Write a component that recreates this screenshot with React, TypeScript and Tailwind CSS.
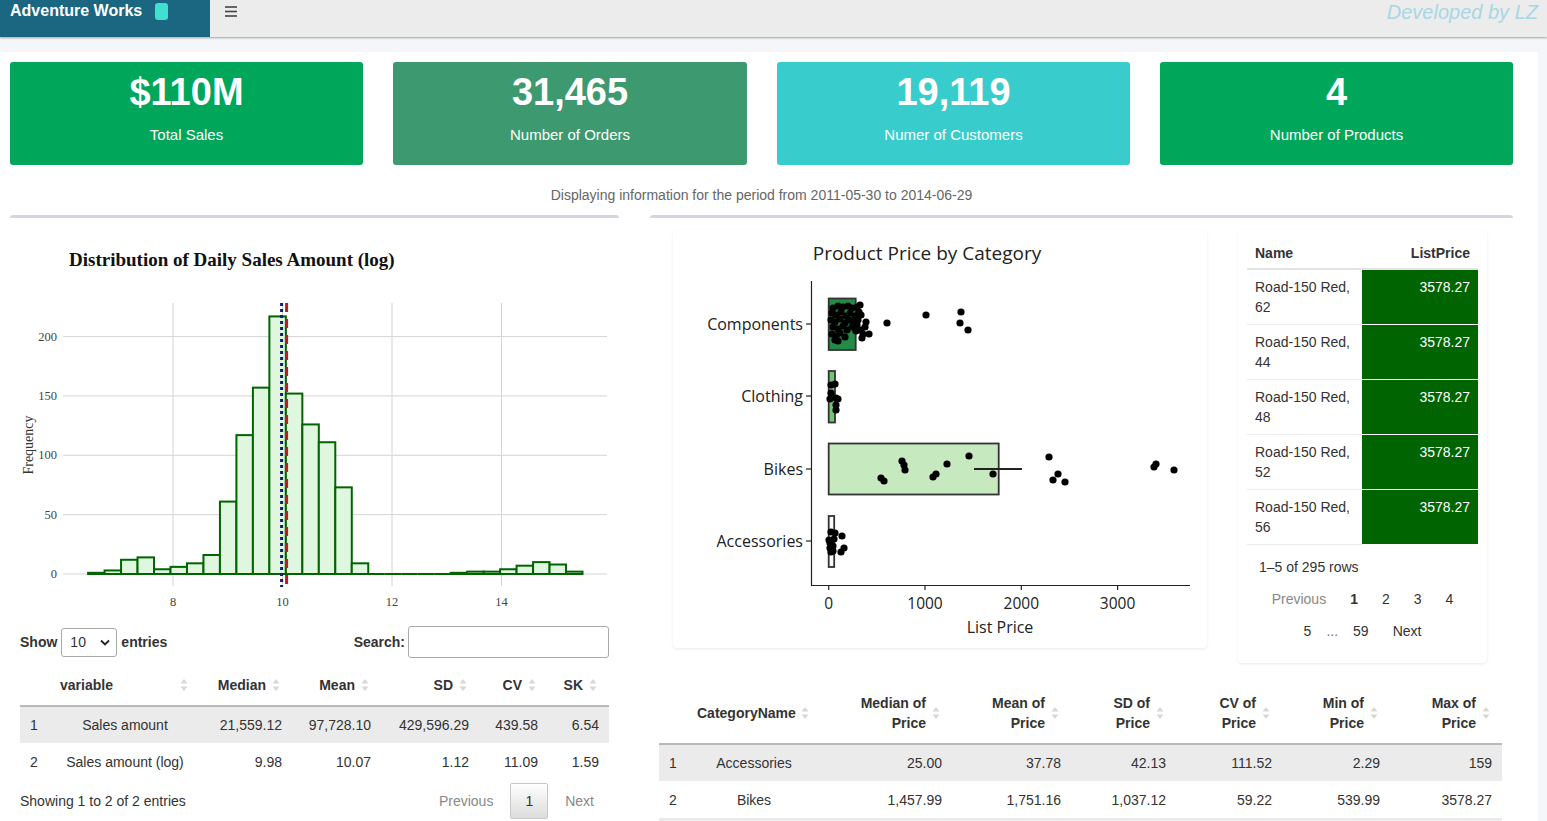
import React from "react";

const hist = [1, 3, 12, 14, 4, 6, 9, 16, 61, 117, 157, 217, 152, 126, 111, 73, 9, 0, 0, 0, 0, 0, 1, 2, 2, 4, 7, 10, 8, 2];

const compPts: [number, number][] = [
  [833, 308], [838, 306], [843, 307], [848, 306], [852, 308], [857, 307], [832, 313], [836, 315], [841, 312],
  [846, 316], [850, 313], [855, 316], [859, 312], [831, 320], [835, 322], [840, 319], [845, 323], [849, 320],
  [853, 322], [858, 320], [833, 327], [838, 329], [843, 326], [847, 330], [852, 327], [856, 331], [832, 334],
  [836, 336], [840, 333], [845, 337], [835, 340], [838, 341], [860, 305], [857, 325], [861, 330], [863, 334],
  [866, 322], [861, 315], [865, 327], [869, 334], [862, 338], [887, 323], [926, 315], [961, 312], [960, 323], [968, 330],
];
const clothPts: [number, number][] = [
  [831, 385], [835, 384], [831, 393], [830, 399], [836, 398], [838, 399], [836, 405], [836, 410],
];
const bikePts: [number, number][] = [
  [969, 456], [1049, 457], [1156, 464], [1154, 467], [1174, 470], [902, 461], [904, 465], [905, 470], [947, 464],
  [881, 478], [884, 481], [933, 477], [936, 474], [993, 474], [1058, 474], [1053, 480], [1065, 482],
];
const accPts: [number, number][] = [
  [831, 532], [835, 533], [842, 536], [830, 543], [833, 546], [831, 552], [844, 548], [841, 552], [829, 540],
  [834, 539], [830, 548], [833, 551],
];

const kpis = [
  { value: "$110M", label: "Total Sales", cls: "w-[353px] bg-[#00a65a]" },
  { value: "31,465", label: "Number of Orders", cls: "w-[354px] bg-[#3d9970]" },
  { value: "19,119", label: "Numer of Customers", cls: "w-[353px] bg-[#39cccc]" },
  { value: "4", label: "Number of Products", cls: "w-[353px] bg-[#00a65a]" },
];

const catRows = [
  ["1", "Accessories", "25.00", "37.78", "42.13", "111.52", "2.29", "159"],
  ["2", "Bikes", "1,457.99", "1,751.16", "1,037.12", "59.22", "539.99", "3578.27"],
];

function SortIcon() {
  return (
    <svg width="8" height="14" viewBox="0 0 8 14" className="shrink-0">
      <path d="M4 1 L7.5 5.5 H0.5 Z" fill="#d8d8d8" />
      <path d="M4 13 L7.5 8.5 H0.5 Z" fill="#d8d8d8" />
    </svg>
  );
}

function NumTh({ lines }: { lines: string[] }) {
  return (
    <th className="py-[10px] pr-[12px] pl-[10px] font-bold align-middle">
      <div className="flex items-center justify-end gap-[6px]">
        <span className="text-right leading-[20px]">
          {lines.map((l, i) => (
            <span key={i} className="block">{l}</span>
          ))}
        </span>
        <SortIcon />
      </div>
    </th>
  );
}

function Histogram() {
  const y0 = 574;
  const k = 1.187;
  return (
    <svg width="609" height="400" viewBox="10 218 609 400" className="block">
      <text x="69" y="266" fontFamily="'Liberation Serif', serif" fontWeight="bold" fontSize="19" fill="#111">
        Distribution of Daily Sales Amount (log)
      </text>
      {[173, 282.5, 392, 501.5].map((x) => (
        <line key={x} x1={x} x2={x} y1={303} y2={586} stroke="#d4d4d4" strokeWidth="1" />
      ))}
      {[0, 50, 100, 150, 200].map((v) => (
        <g key={v}>
          <line x1={63} x2={607} y1={y0 - v * k} y2={y0 - v * k} stroke="#d4d4d4" strokeWidth="1" />
          <text x="57" y={y0 - v * k + 4} textAnchor="end" fontFamily="'Liberation Serif', serif" fontSize="12.5" fill="#444">
            {v}
          </text>
        </g>
      ))}
      {[
        [173, "8"],
        [282.5, "10"],
        [392, "12"],
        [501.5, "14"],
      ].map(([x, t]) => (
        <text key={t as string} x={x as number} y="606" textAnchor="middle" fontFamily="'Liberation Serif', serif" fontSize="12.5" fill="#444">
          {t}
        </text>
      ))}
      <text x="33" y="445" transform="rotate(-90 33 445)" textAnchor="middle" fontFamily="'Liberation Serif', serif" fontSize="14" fill="#333">
        Frequency
      </text>
      {hist.map((h, i) => {
        const x = 88.1 + i * 16.48;
        if (h === 0) {
          return <line key={i} x1={x} x2={x + 16.48} y1={y0} y2={y0} stroke="#006400" strokeWidth="2" />;
        }
        return (
          <rect key={i} x={x} y={y0 - h * k} width={16.48} height={h * k} fill="#dff7df" stroke="#006400" strokeWidth="2" />
        );
      })}
      <line x1={281.6} x2={281.6} y1={303} y2={587} stroke="#191970" strokeWidth="3" strokeDasharray="3 3" />
      <line x1={286.6} x2={286.6} y1={303} y2={587} stroke="#b22222" strokeWidth="3" strokeDasharray="9 7" />
    </svg>
  );
}

function BoxPlot() {
  const font = "'Open Sans', sans-serif";
  const dot = (p: [number, number], i: number) => <circle key={i} cx={p[0]} cy={p[1]} r="3.6" fill="#000" />;
  return (
    <svg width="534" height="418" viewBox="673 230 534 418" className="block">
      <text x="927" y="260" textAnchor="middle" fontFamily={font} fontSize="19" fill="#222">
        Product Price by Category
      </text>
      <line x1={811.5} x2={811.5} y1={281} y2={585.5} stroke="#222" strokeWidth="1.2" />
      <line x1={811} x2={1190} y1={585.5} y2={585.5} stroke="#222" strokeWidth="1.2" />
      {[
        [324, "Components"],
        [396, "Clothing"],
        [469, "Bikes"],
        [541, "Accessories"],
      ].map(([y, t]) => (
        <g key={t as string}>
          <line x1={806} x2={811} y1={y as number} y2={y as number} stroke="#222" strokeWidth="1.2" />
          <text x="803" y={(y as number) + 5.5} textAnchor="end" fontFamily={font} fontSize="16" fill="#222">
            {t}
          </text>
        </g>
      ))}
      {[
        [828.7, "0"],
        [925, "1000"],
        [1021.3, "2000"],
        [1117.6, "3000"],
      ].map(([x, t]) => (
        <g key={t as string}>
          <line x1={x as number} x2={x as number} y1={585} y2={590} stroke="#222" strokeWidth="1.2" />
          <text x={x as number} y="608.5" textAnchor="middle" fontFamily={font} fontSize="15.5" fill="#222">
            {t}
          </text>
        </g>
      ))}
      <text x="1000" y="632.5" textAnchor="middle" fontFamily={font} fontSize="16" fill="#222">
        List Price
      </text>
      <rect x={828.7} y={298.5} width={27} height={51.5} fill="#238b45" stroke="#333" strokeWidth="1.8" />
      <rect x={828.7} y={371} width={6.3} height={51.5} fill="#74c476" stroke="#333" strokeWidth="1.8" />
      <rect x={828.7} y={443.5} width={170} height={51} fill="#c7e9c0" stroke="#333" strokeWidth="1.8" />
      <rect x={828.7} y={516} width={5.5} height={51} fill="#f7fcf5" stroke="#333" strokeWidth="1.8" />
      <line x1={974} x2={1022} y1={469} y2={469} stroke="#222" strokeWidth="2" />
      {compPts.map(dot)}
      {clothPts.map(dot)}
      {bikePts.map(dot)}
      {accPts.map(dot)}
    </svg>
  );
}

export default function App() {
  return (
    <div className="min-h-screen w-full bg-[#f4f6f9] font-['Liberation_Sans',Arial,sans-serif] text-[14px] text-[#333]">
      {/* Header */}
      <div className="relative z-10 flex h-[37px] bg-[#ececec] shadow-[0_1px_2px_rgba(0,0,0,0.35)]">
        <div className="flex h-full w-[210px] items-start bg-[#1b6680] pl-[10px] pt-[2px]">
          <span className="text-[16px] font-bold leading-[18px] text-white">Adventure Works</span>
          <span className="ml-[13px] mt-[1px] h-[17px] w-[13px] rounded-[3px] bg-[#40e0d0]" />
        </div>
        <div className="ml-[15px] pt-[6px]">
          <svg width="12" height="11" viewBox="0 0 12 11">
            <line x1="0" x2="12" y1="1" y2="1" stroke="#444" strokeWidth="1.6" />
            <line x1="0" x2="12" y1="5.5" y2="5.5" stroke="#444" strokeWidth="1.6" />
            <line x1="0" x2="12" y1="10" y2="10" stroke="#444" strokeWidth="1.6" />
          </svg>
        </div>
        <div className="ml-auto mr-[9px] pt-[1px] text-[20px] italic leading-[22px] text-[#a8d6e4]">Developed by LZ</div>
      </div>

      {/* Content */}
      <div className="mt-[15px] w-[1538px] bg-white pl-[10px] pt-[10px]">
        {/* KPI cards */}
        <div className="flex w-[1503px] gap-[30px]">
          {kpis.map((k) => (
            <div key={k.label} className={`${k.cls} flex h-[103px] shrink-0 flex-col items-center rounded-[3px] pt-[8px] text-white`}>
              <div className="text-[38px] font-bold leading-[44px]">{k.value}</div>
              <div className="mt-[11px] text-[15px] leading-[20px]">{k.label}</div>
            </div>
          ))}
        </div>

        <div className="mt-[20px] w-[1503px] text-center leading-[20px] text-[#666]">
          Displaying information for the period from 2011-05-30 to 2014-06-29
        </div>

        {/* Boxes */}
        <div className="mt-[10px] flex w-[1503px] items-start gap-[31px]">
          {/* Left box */}
          <div className="w-[609px] rounded-[3px] border-t-[3px] border-[#d2d6de] bg-white">
            <Histogram />
            <div className="px-[10px]">
              <div className="mt-[8px] flex h-[32px] items-center justify-between">
                <div className="flex items-center font-bold">
                  <span>Show</span>
                  <div className="mx-[4px] flex h-[29px] w-[56px] items-center justify-between rounded-[3px] border border-[#aaa] pl-[8px] pr-[6px] font-normal">
                    <span>10</span>
                    <svg width="10" height="7" viewBox="0 0 10 7">
                      <path d="M1 1.5 L5 5.5 L9 1.5" fill="none" stroke="#222" strokeWidth="1.8" />
                    </svg>
                  </div>
                  <span>entries</span>
                </div>
                <div className="flex items-center font-bold">
                  <span>Search:</span>
                  <div className="ml-[3px] h-[32px] w-[201px] rounded-[3px] border border-[#aaa] bg-white" />
                </div>
              </div>

              <table className="mt-[7px] w-[589px] table-fixed border-collapse">
                <colgroup>
                  <col className="w-[30px]" />
                  <col className="w-[150px]" />
                  <col className="w-[92px]" />
                  <col className="w-[89px]" />
                  <col className="w-[98px]" />
                  <col className="w-[69px]" />
                  <col className="w-[61px]" />
                </colgroup>
                <thead>
                  <tr className="border-b-2 border-[#b9b9b9]">
                    <th />
                    <th className="py-[8px] pl-[10px] pr-[12px] font-bold">
                      <div className="flex items-center justify-between leading-[20px]">
                        <span>variable</span>
                        <SortIcon />
                      </div>
                    </th>
                    <NumTh lines={["Median"]} />
                    <NumTh lines={["Mean"]} />
                    <NumTh lines={["SD"]} />
                    <NumTh lines={["CV"]} />
                    <NumTh lines={["SK"]} />
                  </tr>
                </thead>
                <tbody className="leading-[20px]">
                  <tr className="h-[37px] bg-[#ebebeb]">
                    <td className="pl-[10px]">1</td>
                    <td className="text-center">Sales amount</td>
                    <td className="pr-[10px] text-right">21,559.12</td>
                    <td className="pr-[10px] text-right">97,728.10</td>
                    <td className="pr-[10px] text-right">429,596.29</td>
                    <td className="pr-[10px] text-right">439.58</td>
                    <td className="pr-[10px] text-right">6.54</td>
                  </tr>
                  <tr className="h-[37px]">
                    <td className="pl-[10px]">2</td>
                    <td className="text-center">Sales amount (log)</td>
                    <td className="pr-[10px] text-right">9.98</td>
                    <td className="pr-[10px] text-right">10.07</td>
                    <td className="pr-[10px] text-right">1.12</td>
                    <td className="pr-[10px] text-right">11.09</td>
                    <td className="pr-[10px] text-right">1.59</td>
                  </tr>
                </tbody>
              </table>

              <div className="mt-[3px] flex items-center justify-between pb-[10px]">
                <span className="leading-[20px]">Showing 1 to 2 of 2 entries</span>
                <div className="flex items-center">
                  <span className="px-[15px] py-[7px] leading-[20px] text-[#888]">Previous</span>
                  <span className="ml-[2px] rounded-[2px] border border-[#c8c8c8] bg-gradient-to-b from-white to-[#dcdcdc] px-[14px] py-[7px] leading-[20px]">
                    1
                  </span>
                  <span className="ml-[2px] px-[15px] py-[7px] leading-[20px] text-[#888]">Next</span>
                </div>
              </div>
            </div>
          </div>

          {/* Right box */}
          <div className="w-[863px] rounded-[3px] border-t-[3px] border-[#d2d6de] bg-white">
            <div className="flex items-start pl-[23px] pt-[12px]">
              <div className="h-[418px] w-[534px] rounded-[4px] bg-white shadow-[0_1px_3px_rgba(0,0,0,0.09)]">
                <BoxPlot />
              </div>
              <div className="ml-[31px] w-[249px] rounded-[4px] bg-white px-[9px] pb-[16px] pt-[5px] shadow-[0_1px_3px_rgba(0,0,0,0.09)]">
                <table className="w-[231px] table-fixed border-collapse">
                  <colgroup>
                    <col className="w-[115px]" />
                    <col className="w-[116px]" />
                  </colgroup>
                  <thead>
                    <tr className="border-b-2 border-[#e4e4e4]">
                      <th className="pb-[5px] pl-[8px] pt-[8px] text-left font-bold leading-[20px]">Name</th>
                      <th className="pb-[5px] pr-[8px] pt-[8px] text-right font-bold leading-[20px]">ListPrice</th>
                    </tr>
                  </thead>
                  <tbody className="leading-[20px]">
                    {["62", "44", "48", "52", "56"].map((n) => (
                      <tr key={n}>
                        <td className="h-[55px] border-b border-[#ececec] px-[8px] py-[7px] align-top">
                          Road-150 Red, {n}
                        </td>
                        <td className="h-[55px] border-b border-white bg-[#006400] px-[8px] py-[7px] text-right align-top text-white">
                          3578.27
                        </td>
                      </tr>
                    ))}
                  </tbody>
                </table>
                <div className="mt-[12px] pl-[12px] leading-[20px]">1–5 of 295 rows</div>
                <div className="mt-[6px] flex flex-wrap items-center justify-center leading-[20px]">
                  <span className="px-[12px] py-[6px] text-[#888]">Previous</span>
                  <span className="px-[12px] py-[6px] font-bold">1</span>
                  <span className="px-[12px] py-[6px]">2</span>
                  <span className="px-[12px] py-[6px]">3</span>
                  <span className="px-[12px] py-[6px]">4</span>
                  <span className="px-[12px] py-[6px]">5</span>
                  <span className="px-[3px] py-[6px] text-[#777]">...</span>
                  <span className="px-[12px] py-[6px]">59</span>
                  <span className="px-[12px] py-[6px]">Next</span>
                </div>
              </div>
            </div>

            <table className="ml-[9px] mt-[20px] w-[843px] table-fixed border-collapse">
              <colgroup>
                <col className="w-[28px]" />
                <col className="w-[134px]" />
                <col className="w-[131px]" />
                <col className="w-[119px]" />
                <col className="w-[105px]" />
                <col className="w-[106px]" />
                <col className="w-[108px]" />
                <col className="w-[112px]" />
              </colgroup>
              <thead>
                <tr className="border-b-2 border-[#b9b9b9]">
                  <th />
                  <th className="py-[10px] pl-[10px] pr-[12px] font-bold">
                    <div className="flex items-center justify-between leading-[20px]">
                      <span>CategoryName</span>
                      <SortIcon />
                    </div>
                  </th>
                  <NumTh lines={["Median of", "Price"]} />
                  <NumTh lines={["Mean of", "Price"]} />
                  <NumTh lines={["SD of", "Price"]} />
                  <NumTh lines={["CV of", "Price"]} />
                  <NumTh lines={["Min of", "Price"]} />
                  <NumTh lines={["Max of", "Price"]} />
                </tr>
              </thead>
              <tbody className="leading-[20px]">
                {catRows.map((r, i) => (
                  <tr key={r[0]} className={`h-[37px] ${i % 2 === 0 ? "bg-[#ebebeb]" : "bg-white"}`}>
                    <td className="pl-[10px]">{r[0]}</td>
                    <td className="text-center">{r[1]}</td>
                    {r.slice(2).map((v, j) => (
                      <td key={j} className="pr-[10px] text-right">
                        {v}
                      </td>
                    ))}
                  </tr>
                ))}
              </tbody>
            </table>
            <div className="ml-[9px] h-[14px] w-[843px] bg-[#ebebeb]" />
          </div>
        </div>
      </div>
    </div>
  );
}
